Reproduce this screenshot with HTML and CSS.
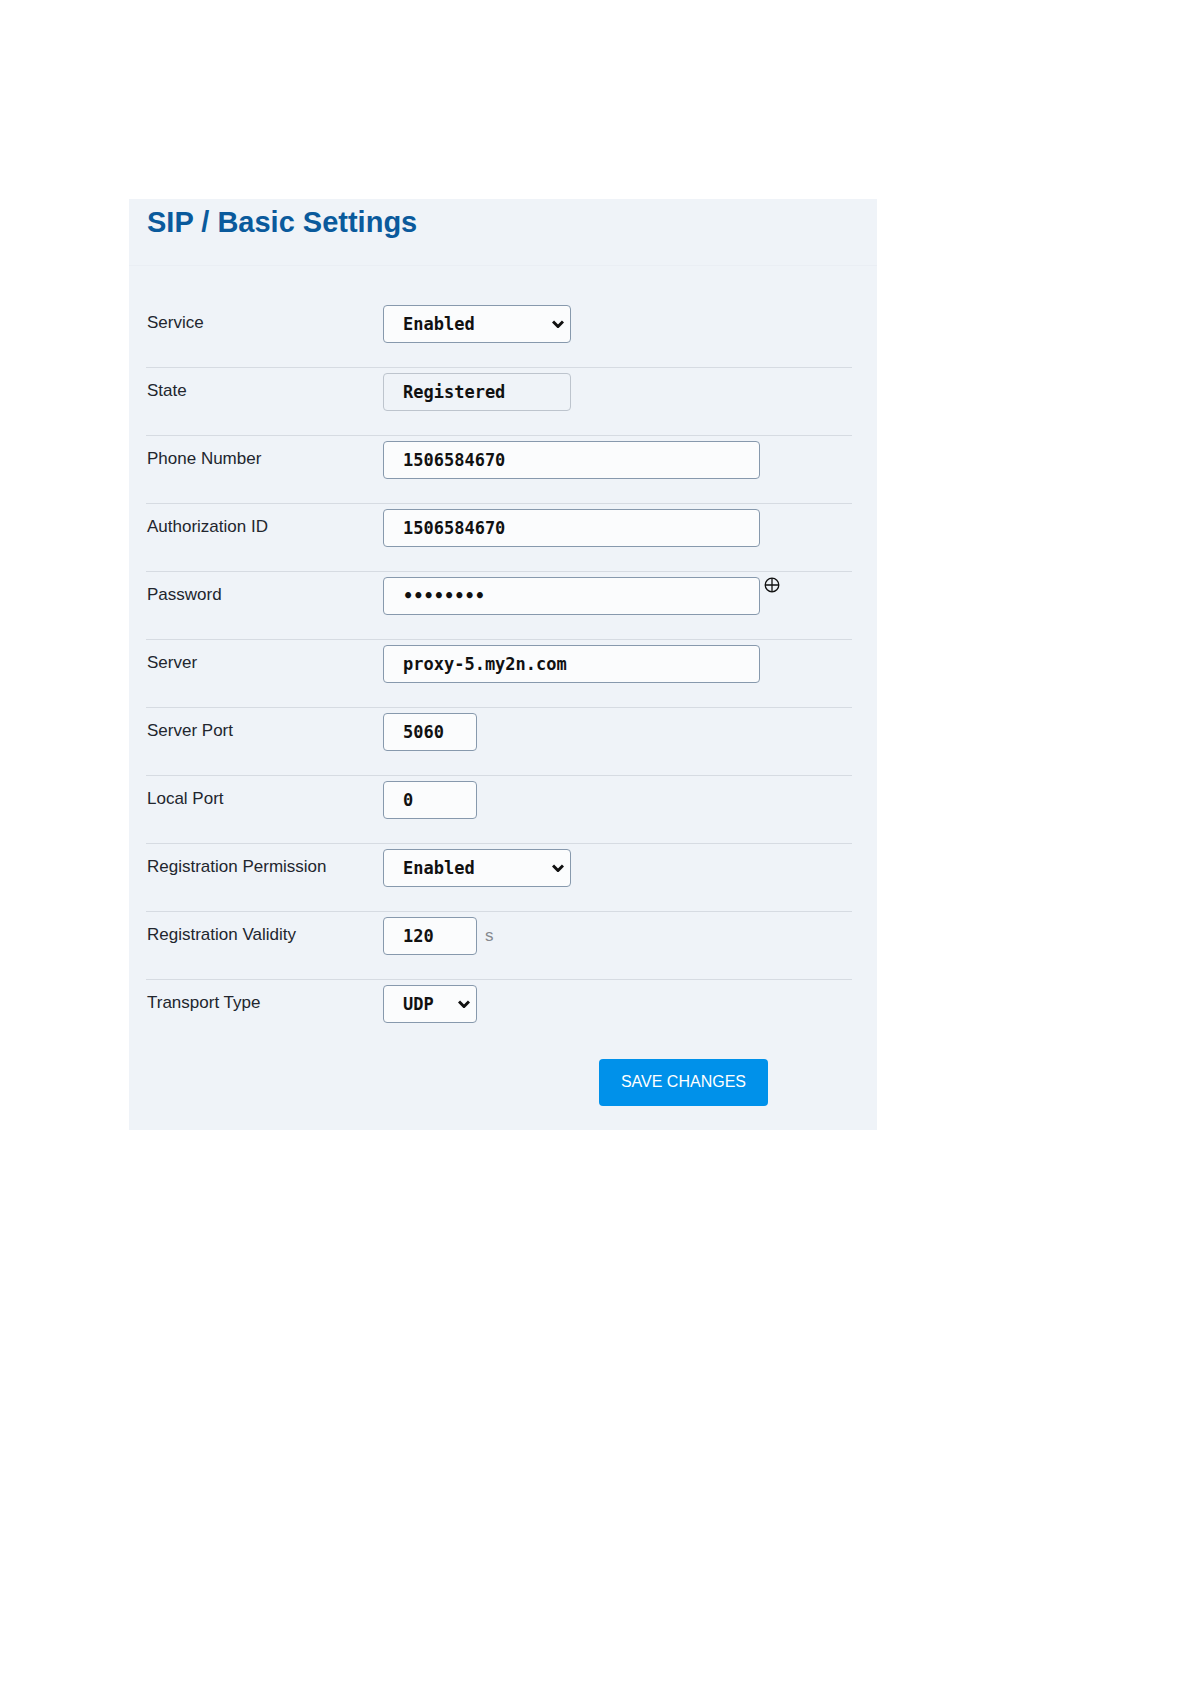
FILE: index.html
```html
<!DOCTYPE html>
<html lang="en">
<head>
    <meta charset="UTF-8">
    <meta name="viewport" content="width=device-width, initial-scale=1.0">
    <title>SIP / Basic Settings</title>
    <link rel="stylesheet" href="styles.css">
</head>
<body>

    <main class="panel">
        <h1>SIP / Basic Settings</h1>
        <form>
            <div class="row">
                <label for="service">Service</label>
                <div class="field">
                    <div class="select medium">
                        <select id="service">
                            <option>Enabled</option>
                            <option>Disabled</option>
                        </select>
                        <svg viewBox="0 0 12 8"><path d="M1 1.5l5 5 5-5"/></svg>
                    </div>
                </div>
            </div>
            <div class="row">
                <label for="state">State</label>
                <div class="field"><input type="text" id="state" class="medium" value="Registered" readonly></div>
            </div>
            <div class="row">
                <label for="phone">Phone Number</label>
                <div class="field"><input type="text" id="phone" class="wide" value="1506584670"></div>
            </div>
            <div class="row">
                <label for="auth-id">Authorization ID</label>
                <div class="field"><input type="text" id="auth-id" class="wide" value="1506584670"></div>
            </div>
            <div class="row">
                <label for="password">Password</label>
                <div class="field">
                    <input type="password" id="password" class="wide" value="password">
                    <button type="button" class="reveal" aria-label="Show password">
                        <svg viewBox="0 0 16 16"><circle cx="8" cy="8" r="6.8"/><path d="M8 1v14M1 8h14"/></svg>
                    </button>
                </div>
            </div>
            <div class="row">
                <label for="server">Server</label>
                <div class="field"><input type="text" id="server" class="wide" value="proxy-5.my2n.com"></div>
            </div>
            <div class="row">
                <label for="server-port">Server Port</label>
                <div class="field"><input type="text" id="server-port" class="small" value="5060"></div>
            </div>
            <div class="row">
                <label for="local-port">Local Port</label>
                <div class="field"><input type="text" id="local-port" class="small" value="0"></div>
            </div>
            <div class="row">
                <label for="permission">Registration Permission</label>
                <div class="field">
                    <div class="select medium">
                        <select id="permission">
                            <option>Enabled</option>
                            <option>Disabled</option>
                        </select>
                        <svg viewBox="0 0 12 8"><path d="M1 1.5l5 5 5-5"/></svg>
                    </div>
                </div>
            </div>
            <div class="row">
                <label for="validity">Registration Validity</label>
                <div class="field">
                    <input type="text" id="validity" class="small" value="120">
                    <span class="unit">s</span>
                </div>
            </div>
            <div class="row">
                <label for="transport">Transport Type</label>
                <div class="field">
                    <div class="select small">
                        <select id="transport">
                            <option>UDP</option>
                            <option>TCP</option>
                            <option>TLS</option>
                        </select>
                        <svg viewBox="0 0 12 8"><path d="M1 1.5l5 5 5-5"/></svg>
                    </div>
                </div>
            </div>
            <div class="actions">
                <button type="submit" class="save">SAVE CHANGES</button>
            </div>
        </form>
    </main>

</body>
</html>
```

FILE: styles.css
```css
* {
    box-sizing: border-box;
}

body {
    margin: 0;
    padding: 199px 24px 24px 129px;
    background: white;
    color: #22262e;
    font: 17px/20px "Liberation Sans", Arial, sans-serif;
}

.panel {
    max-width: 748px;
    background: #eff3f8;
}

h1 {
    margin: 0;
    padding: 7px 18px 26px;
    border-bottom: 1px solid #eaeef4;
    color: #0a5a9c;
    font-size: 29px;
    line-height: 33px;
}

form {
    padding: 34px 25px 24px 17px;
}

.row {
    display: grid;
    grid-template-columns: 237px 1fr;
    padding: 5px 0 24px;
    border-bottom: 1px solid #d6dbe2;
}

.row:nth-last-child(2) {
    border-bottom: none;
}

label {
    padding: 8px 1px;
}

.field {
    display: flex;
    align-items: flex-start;
}

input, select {
    width: 100%;
    height: 38px;
    margin: 0;
    padding: 0 19px;
    border: 1px solid #8799ad;
    border-radius: 4px;
    background: #fbfcfd;
    color: #111;
    font: bold 17px "DejaVu Sans Mono", monospace;
}

select {
    appearance: none;
}

input[readonly] {
    border-color: #bdc4cd;
    background: transparent;
}

.small {
    width: 94px;
}

.medium {
    width: 188px;
}

.wide {
    max-width: 377px;
}

.select {
    position: relative;
}

.select svg {
    position: absolute;
    top: 15px;
    right: 7px;
    width: 12px;
    height: 8px;
    fill: none;
    stroke: #111;
    stroke-width: 3;
    pointer-events: none;
}

.reveal {
    margin-left: 4px;
    padding: 0;
    border: none;
    background: none;
    cursor: pointer;
}

.reveal svg {
    display: block;
    width: 16px;
    height: 16px;
    fill: none;
    stroke: #111;
    stroke-width: 1.3;
}

.unit {
    padding: 9px 8px;
    color: #85898f;
}

.actions {
    display: flex;
    justify-content: flex-end;
    padding: 12px 84px 0 0;
}

.save {
    padding: 0 22px 2px;
    height: 47px;
    border: none;
    border-radius: 4px;
    background: #0091ea;
    color: white;
    font: 16px "Liberation Sans", Arial, sans-serif;
    cursor: pointer;
}

.save:hover {
    background: #007fce;
}
```
